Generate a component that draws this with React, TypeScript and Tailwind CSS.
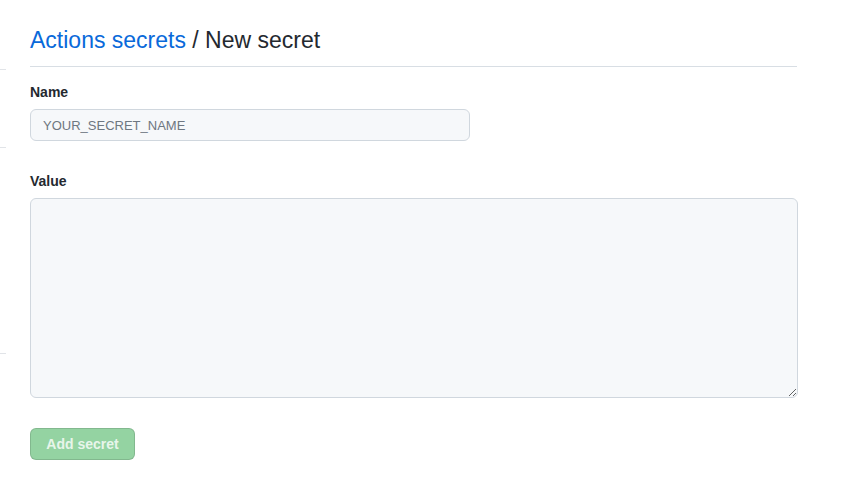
export default function App() {
    return (
        <div className="flex min-h-[479px] w-[862px] bg-white font-['Liberation_Sans',Arial,sans-serif] text-[#24292f]">
            {/* leftover sidebar edges */}
            <div className="w-[6px] shrink-0">
                <div className="mt-[69px] h-px bg-[#e1e4e8]"></div>
                <div className="mt-[77px] h-px bg-[#e1e4e8]"></div>
                <div className="mt-[205px] h-px bg-[#e1e4e8]"></div>
            </div>

            <div className="ml-[24px] w-[767px] pt-[22px]">
                {/* Subhead */}
                <div className="mb-[15px] border-b border-[#d8dee4] pb-[8px]">
                    <h2 className="text-[23px] leading-[36px] font-normal">
                        <a className="text-[#0969da]">Actions secrets</a> / New secret
                    </h2>
                </div>

                <form>
                    <div>
                        <label className="block text-[14px] font-bold leading-[21px]">Name</label>
                        <input
                            type="text"
                            placeholder="YOUR_SECRET_NAME"
                            className="mt-[6px] block h-[32px] w-[440px] rounded-[6px] border border-[#d0d7de] bg-[#f6f8fa] px-[12px] text-[13px] text-[#24292f] outline-none placeholder:text-[#6e7781]"
                        />
                    </div>

                    <div className="mt-[30px]">
                        <label className="block text-[14px] font-bold leading-[21px]">Value</label>
                        <textarea className="mt-[6px] block h-[200px] w-[768px] rounded-[6px] border border-[#d0d7de] bg-[#f6f8fa] px-[12px] py-[5px] text-[14px] outline-none"></textarea>
                    </div>

                    <button
                        type="button"
                        className="mt-[30px] h-[32px] w-[105px] rounded-[6px] border border-[rgba(27,31,36,0.15)] bg-[#94d3a2] text-[14px] font-bold text-[rgba(255,255,255,0.8)]"
                    >
                        Add secret
                    </button>
                </form>
            </div>
        </div>
    );
}
